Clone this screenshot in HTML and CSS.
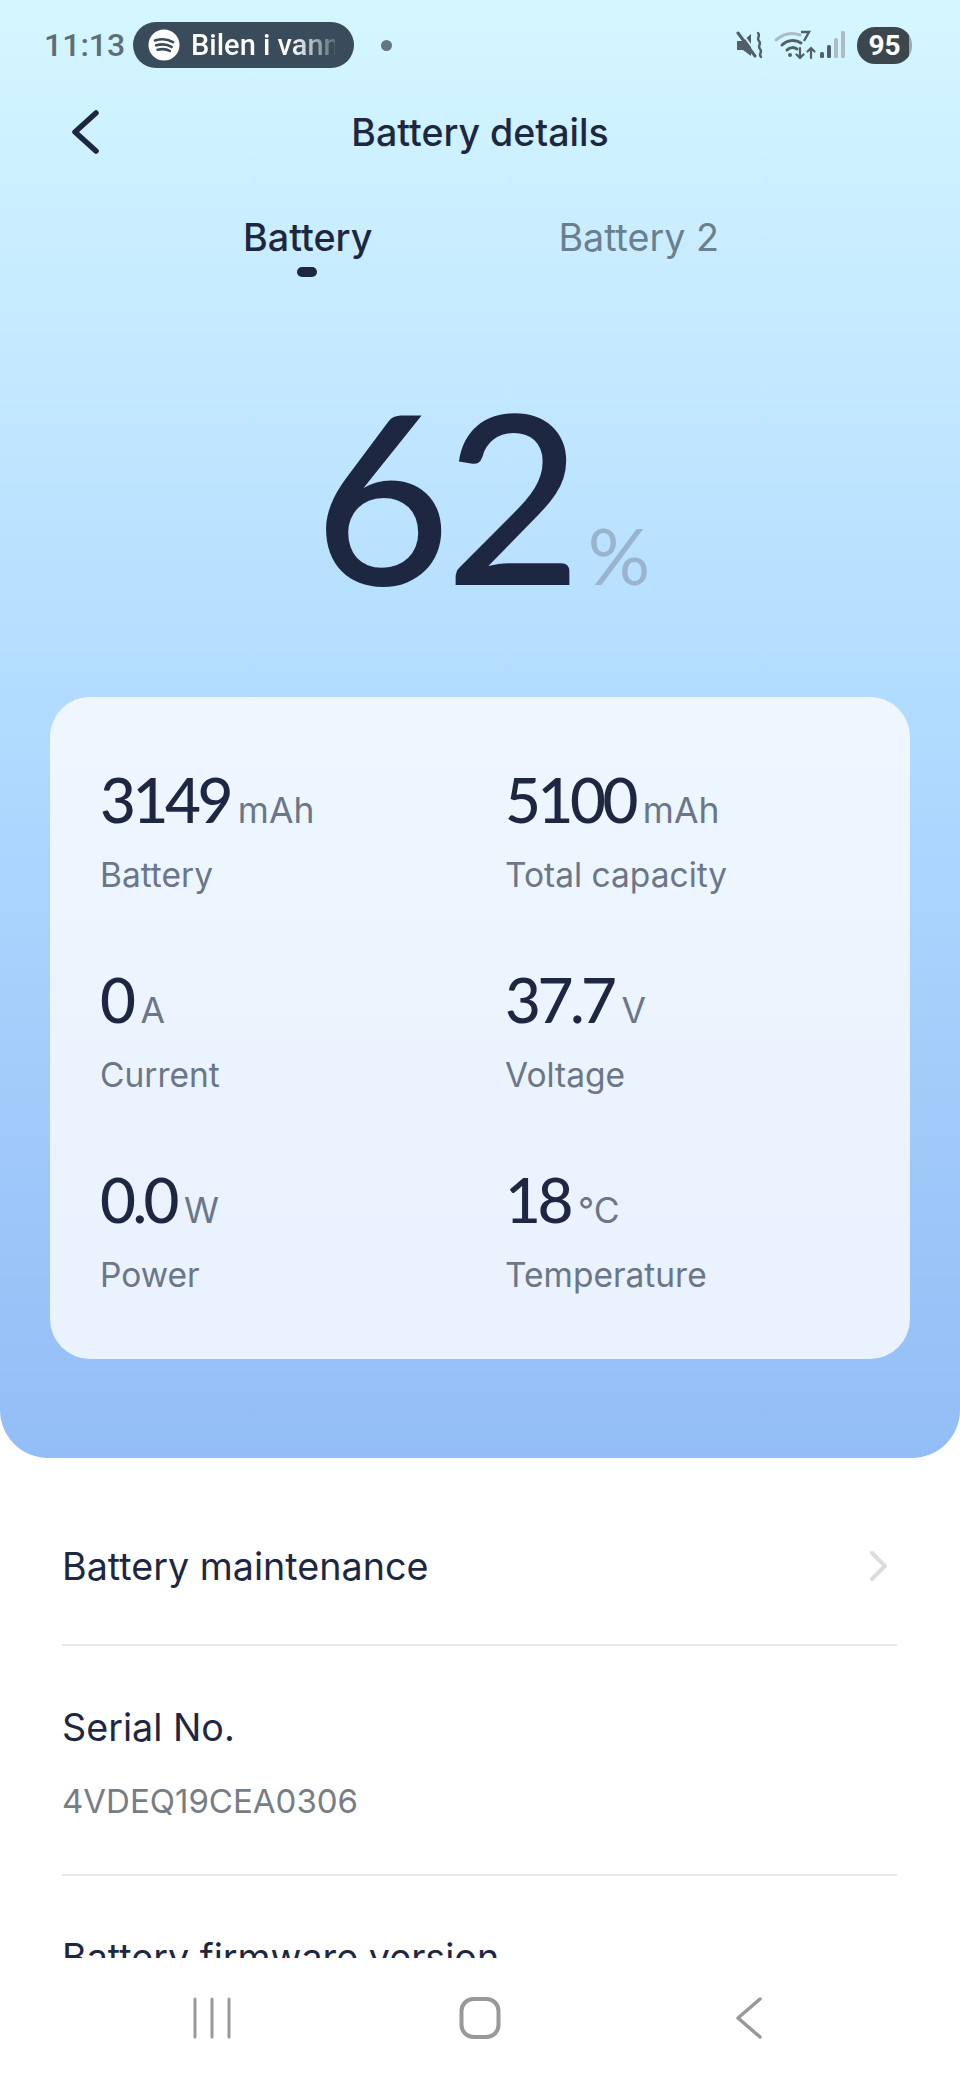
FILE: index.html
```html
<!DOCTYPE html>
<html lang="en">
<head>
  <meta charset="UTF-8" />
  <meta name="viewport" content="width=device-width, initial-scale=1" />
  <title>Battery details</title>
  <link rel="stylesheet" href="styles.css">
</head>
<body>
  <div class="screen">
    <div class="scroll">
      <section class="hero">
        <div class="status">
          <span class="clock">11:13</span>
          <span class="pill">
            <svg class="spotify" viewBox="0 0 32 32">
              <circle cx="16" cy="16" r="15.5" fill="#fff"/>
              <path d="M7 11.5c6-1.8 13-1.3 18 1.6M8.2 16.3c5-1.4 11-1 15.4 1.5M9.6 20.8c4-1 9-.8 12.2 1.2" fill="none" stroke="#3a4c5c" stroke-width="2.6" stroke-linecap="round"/>
            </svg>
            <span class="pill-text">Bilen i vann</span>
          </span>
          <span class="dot"></span>
          <span class="status-right">
            <svg class="mute" viewBox="0 0 28 28">
              <path d="M1 10h6l8-7v22l-8-6H1z" fill="#525f66"/>
              <path d="M2 2l17 23" stroke="#525f66" stroke-width="3" stroke-linecap="round"/>
              <path d="M2 2l17 23" transform="translate(3 -1)" stroke="#d0f3ff" stroke-width="2"/>
              <path d="M22 2c3 3-2 5 1 8s-2 5 1 8-2 5 1 8" fill="none" stroke="#525f66" stroke-width="2.4" stroke-linecap="round"/>
            </svg>
            <svg class="wifi" viewBox="0 0 42 30">
              <path d="M2 10c8-7 16-8 24-5" fill="none" stroke="#adbcc2" stroke-width="3" stroke-linecap="round"/>
              <path d="M8 15c5-5 13-6 19-2" fill="none" stroke="#525f66" stroke-width="3" stroke-linecap="round"/>
              <path d="M13 20c3-3 7-3 10-1" fill="none" stroke="#525f66" stroke-width="3" stroke-linecap="round"/>
              <circle cx="16" cy="25" r="2" fill="#525f66"/>
              <path d="M26 18v10m-3.500-3.500l3.500 3.500 3.500-3.500M37 28v-10m-3.500 3.500l3.500-3.500 3.500 3.500" fill="none" stroke="#525f66" stroke-width="2.200" stroke-linecap="round"/>
              <path d="M27 2h8l-5 9" fill="none" stroke="#525f66" stroke-width="2.400"/>
            </svg>
            <svg class="signal" viewBox="0 0 26 28">
              <rect x="0" y="21" width="4" height="6" rx="1.500" fill="#525f66"/>
              <rect x="7" y="14" width="4" height="13" rx="1.500" fill="#525f66"/>
              <rect x="14" y="7" width="4" height="20" rx="1.500" fill="#adbcc2"/>
              <rect x="21" y="0" width="4" height="27" rx="1.500" fill="#adbcc2"/>
            </svg>
            <span class="batt">95</span>
          </span>
        </div>

        <header class="topbar">
          <svg class="back" viewBox="0 0 28 44">
            <path d="M25 3L4 22l21 19" fill="none" stroke="#1e2742" stroke-width="5.500" stroke-linecap="round" stroke-linejoin="round"/>
          </svg>
          <h1>Battery details</h1>
        </header>

        <nav class="tabs">
          <span class="tab active">Battery</span>
          <span class="tab">Battery 2</span>
        </nav>

        <div class="level">
          <span class="level-num">62</span>
          <span class="level-pct">%</span>
        </div>

        <div class="card">
          <div class="stat">
            <div class="stat-val">3149<small>mAh</small></div>
            <div class="stat-name">Battery</div>
          </div>
          <div class="stat">
            <div class="stat-val">5100<small>mAh</small></div>
            <div class="stat-name">Total capacity</div>
          </div>
          <div class="stat">
            <div class="stat-val">0<small>A</small></div>
            <div class="stat-name">Current</div>
          </div>
          <div class="stat">
            <div class="stat-val">37.7<small>V</small></div>
            <div class="stat-name">Voltage</div>
          </div>
          <div class="stat">
            <div class="stat-val">0.0<small>W</small></div>
            <div class="stat-name">Power</div>
          </div>
          <div class="stat">
            <div class="stat-val">18<small>°C</small></div>
            <div class="stat-name">Temperature</div>
          </div>
        </div>
      </section>

      <section class="list">
        <div class="row row-link">
          <span class="row-title">Battery maintenance</span>
          <svg class="chev" viewBox="0 0 20 32">
            <path d="M3 3l13 13L3 29" fill="none" stroke="#dcdcdc" stroke-width="4" stroke-linecap="round" stroke-linejoin="round"/>
          </svg>
        </div>
        <div class="row row-serial">
          <div class="row-title">Serial No.</div>
          <div class="row-sub">4VDEQ19CEA0306</div>
        </div>
        <div class="row">
          <div class="row-title">Battery firmware version</div>
        </div>
      </section>
    </div>

    <footer class="navbar">
      <svg class="nav-icon" viewBox="0 0 44 44">
        <path d="M5 3v38M22 3v38M39 3v38" stroke="#999" stroke-width="3" stroke-linecap="round"/>
      </svg>
      <svg class="nav-icon" viewBox="0 0 44 44">
        <rect x="3.500" y="3" width="37" height="38" rx="12" fill="none" stroke="#999" stroke-width="4"/>
      </svg>
      <svg class="nav-icon" viewBox="0 0 44 44">
        <path d="M34 3L12 22l22 19" fill="none" stroke="#999" stroke-width="3.500" stroke-linecap="round" stroke-linejoin="round"/>
      </svg>
    </footer>
  </div>
</body>
</html>
```

FILE: styles.css
```css
* {
  box-sizing: border-box;
}
body {
  margin: 0;
  font-family: Inter, sans-serif;
  background: #fff;
  color: #1e2742;
}
.screen {
  width: 960px;
  height: 2080px;
  display: flex;
  flex-direction: column;
  overflow: hidden;
}
.scroll {
  height: 1958px;
  overflow: hidden;
}

.hero {
  height: 1458px;
  padding-top: 22px;
  border-radius: 0 0 48px 48px;
  background: linear-gradient(180deg, #d4f7ff 0%, #c6eaff 22%, #b2dcff 48%, #a4cdfb 72%, #93bdf6 100%);
}

.status {
  height: 46px;
  padding: 0 48px 0 44px;
  display: flex;
  align-items: center;
}
.clock {
  font-family: Roboto, sans-serif;
  font-size: 32px;
  font-weight: 500;
  color: #5d6e75;
  width: 89px;
}
.pill {
  width: 221px;
  height: 46px;
  padding: 0 15px;
  border-radius: 23px;
  background: #3a4c5c;
  display: flex;
  align-items: center;
  gap: 11px;
}
.spotify {
  width: 32px;
  height: 32px;
  flex: none;
}
.pill-text {
  font-family: Roboto, sans-serif;
  font-size: 29px;
  font-weight: 500;
  color: transparent;
  white-space: nowrap;
  overflow: hidden;
  width: 144px;
  background: linear-gradient(90deg, #fff 70%, #5b6c7a 100%);
  -webkit-background-clip: text;
  background-clip: text;
}
.dot {
  width: 11px;
  height: 11px;
  margin-left: 27px;
  border-radius: 50%;
  background: #66767f;
}
.status-right {
  margin-left: auto;
  display: flex;
  align-items: center;
}
.mute {
  width: 28px;
  height: 28px;
}
.wifi {
  width: 42px;
  height: 30px;
  margin-left: 10px;
}
.signal {
  width: 26px;
  height: 28px;
  margin-left: 4px;
}
.batt {
  width: 55px;
  height: 37px;
  margin-left: 11px;
  border-radius: 18px;
  background: linear-gradient(90deg, #3b474d 94%, #9aa7ad 94%);
  color: #fff;
  font-family: Roboto, sans-serif;
  font-size: 28px;
  font-weight: 700;
  line-height: 37px;
  text-align: center;
}

.topbar {
  position: relative;
  height: 44px;
  margin-top: 42px;
  display: flex;
  align-items: center;
  justify-content: center;
}
.back {
  position: absolute;
  left: 71px;
  top: 0;
  width: 28px;
  height: 44px;
}
h1 {
  margin: 0;
  font-size: 37.5px;
  font-weight: 500;
  color: #1e2742;
}

.tabs {
  margin-top: 60px;
  display: flex;
  padding-left: 243px;
  gap: 186px;
}
.tab {
  position: relative;
  font-size: 37.7px;
  line-height: 46px;
  color: #6a7f8f;
}
.tab.active {
  font-weight: 500;
  color: #1e2742;
}
.tab.active::after {
  content: "";
  position: absolute;
  left: 54px;
  top: 53px;
  width: 20px;
  height: 10px;
  border-radius: 5px;
  background: #1e2742;
}

.level {
  height: 250px;
  margin-top: 109px;
  padding-left: 314px;
  display: flex;
  align-items: baseline;
  font-family: Lato, sans-serif;
}
.level-num {
  font-size: 236px;
  font-weight: 500;
  line-height: 250px;
  letter-spacing: -6px;
  color: #1e2742;
}
.level-pct {
  margin-left: 12px;
  font-size: 78px;
  font-weight: 400;
  color: #9ab4cf;
}

.card {
  height: 662px;
  margin: 78px 50px 0;
  padding: 71px 50px 0;
  border-radius: 40px;
  background: linear-gradient(180deg, #eef7ff, #e9f2fd);
  display: grid;
  grid-template-columns: 405px 1fr;
  grid-auto-rows: 200px;
}
.stat-val {
  font-family: Lato, sans-serif;
  font-size: 62px;
  font-weight: 500;
  line-height: 62px;
  letter-spacing: -3.500px;
  color: #1e2742;
  white-space: nowrap;
}
.stat-val small {
  margin-left: 8px;
  font-family: Inter, sans-serif;
  font-size: 35.500px;
  font-weight: 400;
  letter-spacing: 0;
  color: #6b7688;
}
.stat-name {
  margin-top: 13px;
  font-size: 33.500px;
  line-height: 40px;
  color: #6b7688;
}

.list {
  padding: 0 63px 0 62px;
}
.row {
  border-bottom: 2px solid #e8e8e8;
  padding: 59px 0 57px;
}
.row-link {
  height: 188px;
  display: flex;
  align-items: center;
  justify-content: space-between;
  padding: 30px 8px 0 0;
}
.row-serial {
  padding-bottom: 53px;
}
.row-title {
  font-size: 37.700px;
  line-height: 44px;
  color: #1e2742;
}
.row-sub {
  margin-top: 32px;
  font-size: 33px;
  line-height: 40px;
  color: #777d85;
}
.chev {
  width: 20px;
  height: 32px;
}

.navbar {
  flex: 1;
  background: #fff;
  display: flex;
  justify-content: center;
  gap: 224px;
  padding-top: 38px;
}
.nav-icon {
  width: 44px;
  height: 44px;
}
```
